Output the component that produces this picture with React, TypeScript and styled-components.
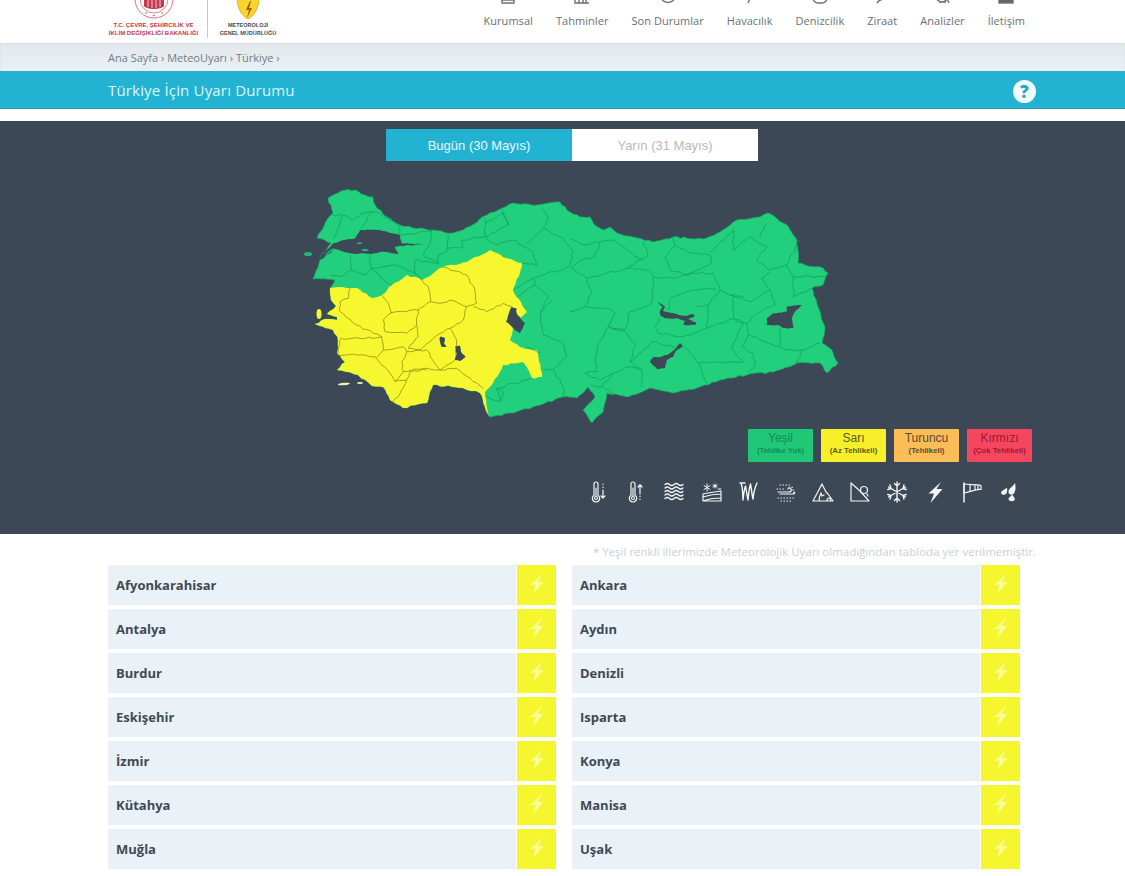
import React from 'react';
import styled, { createGlobalStyle } from 'styled-components';

const Global = createGlobalStyle`
  html, body { margin: 0; padding: 0; background: #fff; overflow: hidden; }
  body { font-family: "Open Sans", "Liberation Sans", sans-serif; }
  * { box-sizing: border-box; }
`;
const Page = styled.div`width: 1125px; height: 876px; overflow: hidden; background: #fff;`;
const Header = styled.header`
  height: 43px; display: flex; justify-content: space-between; padding: 0 100px 0 108px;
  overflow: hidden; background: #fff;
`;
const Logos = styled.div`display: flex; align-items: flex-start;`;
const LogoBlock = styled.div<{ $w: number }>`display: flex; flex-direction: column; align-items: center; width: ${p => p.$w}px;`;
const Divider = styled.div`width: 1px; height: 38px; background: #c9c9c9; margin: 0 10px 0 8px;`;
const Emblem = styled.svg`display: block; margin-top: -22px; height: 42px; width: 42px; flex: none;`;
const LogoText = styled.div<{ $s: number; $c: string; $m: number }>`
  font-family: "Liberation Sans", sans-serif; font-weight: 700; text-align: center; white-space: nowrap;
  font-size: ${p => p.$s}px; line-height: 8px; color: ${p => p.$c}; margin-top: ${p => p.$m}px;
`;
const Nav = styled.nav`display: flex; gap: 23px;`;
const NavItem = styled.a`
  display: flex; flex-direction: column; align-items: center; font-size: 11px; line-height: 15px;
  color: #6a7075; white-space: nowrap; letter-spacing: 0.05px;
`;
const NavIcon = styled.svg`display: block; width: 20px; height: 20px; margin-top: -14px; margin-bottom: 7px; fill: none; stroke: #6b7177; stroke-width: 1.4;`;
const Crumbs = styled.div`
  height: 28px; background: linear-gradient(#e3e8ec, #e9f0f5); box-shadow: inset 0 1px 2px #d6dadd;
  padding: 1px 108px 0; display: flex; align-items: center; font-size: 11px; color: #737d86;
`;
const TitleBar = styled.div`
  height: 38px; background: #22b3d3; border-bottom: 1px solid #2a9db6; display: flex; align-items: center;
  justify-content: space-between; padding: 0 89px 0 108px; color: #dff7fb; font-size: 15px; font-weight: 500;
  letter-spacing: 0.17px;
`;
const Help = styled.div`
  width: 23px; height: 23px; border-radius: 50%; background: #f3fbfd; color: #22a9c8; font-weight: 800;
  font-size: 17px; display: flex; align-items: center; justify-content: center; margin: 4px 0 0 0;
`;
const Dark = styled.section`
  margin-top: 12px; height: 413px; background: #3d4856; display: flex; flex-direction: column; padding-top: 8px;
`;
const Tabs = styled.div`display: flex; justify-content: center; height: 32px; flex: none; padding-left: 19px;`;
const Tab = styled.div<{ $active?: boolean }>`
  width: 186px; display: flex; align-items: center; justify-content: center;
  font-family: "Liberation Sans", sans-serif; font-size: 13px;
  background: ${p => (p.$active ? '#22b3d3' : '#fff')}; color: ${p => (p.$active ? '#e8f7fa' : '#b9b9b9')};
`;
const MapSvg = styled.svg`display: block; flex: none; width: 1125px; height: 268px;`;
const Legend = styled.div`display: flex; justify-content: flex-end; gap: 8px; padding-right: 93px; flex: none;`;
const LegendBox = styled.div<{ $bg: string; $fg: string }>`
  width: 65px; height: 33px; border-radius: 1px; background: ${p => p.$bg}; color: ${p => p.$fg};
  font-family: "Liberation Sans", sans-serif; display: flex; flex-direction: column; align-items: center; padding-top: 2px;
`;
const LegendName = styled.span`font-size: 12px; line-height: 14px;`;
const LegendSub = styled.span`font-size: 7.8px; font-weight: 700; line-height: 12px; white-space: nowrap;`;
const IconRow = styled.div`display: flex; justify-content: flex-end; gap: 13.2px; padding: 18px 104px 0 0;`;
const Hazard = styled.svg`display: block; width: 24px; height: 24px; fill: none; stroke: #f2f4f5; stroke-width: 1.2; stroke-linecap: round; stroke-linejoin: round;`;
const Note = styled.div`
  height: 31px; padding: 0 89px 0 0; text-align: right; font-size: 11.5px; line-height: 35px; color: #c9d0d5; white-space: nowrap;
`;
const Grid = styled.div`display: grid; grid-template-columns: 448px 448px; column-gap: 16px; row-gap: 4px; padding-left: 108px;`;
const Row = styled.div`display: flex; height: 40px; gap: 1px;`;
const Name = styled.div`
  flex: 1; background: #eaf1f7; color: #3f4a55; font-weight: 700; font-size: 13px; padding-left: 8px;
  display: flex; align-items: center;
`;
const Cell = styled.div`width: 39px; background: #f6f62e; display: flex; align-items: center; justify-content: center;`;
const Bolt = styled.svg`display: block; width: 14px; height: 20px; fill: #fbfb9a; margin-top: -3px;`;

const rnd = (a: number, b: number, c: number, d: number, i: number) => {
  const v = Math.sin(a * 12.9898 + b * 78.233 + c * 37.719 + d * 11.13 + i * 3.7) * 43758.5453;
  return (v - Math.floor(v) - 0.5) * 2;
};
/* Roughens a straight-segment outline so that it reads as a coast or a border on the map. */
const wiggle = (d: string, amp: number, step: number) => {
  const n = (d.match(/-?[\d.]+/g) || []).map(Number);
  const pts: [number, number][] = [];
  for (let i = 0; i + 1 < n.length; i += 2) pts.push([n[i], n[i + 1]]);
  const closed = /Z/.test(d);
  if (closed) pts.push(pts[0]);
  let out = `M${pts[0][0]} ${pts[0][1]}`;
  for (let s = 0; s + 1 < pts.length; s++) {
    const [ax, ay] = pts[s];
    const [bx, by] = pts[s + 1];
    const len = Math.hypot(bx - ax, by - ay) || 1;
    const parts = Math.max(1, Math.round(len / step));
    for (let i = 1; i < parts; i++) {
      const t = i / parts;
      const o = amp * rnd(ax, ay, bx, by, i);
      out += `L${(ax + (bx - ax) * t - ((by - ay) / len) * o).toFixed(1)} ${(ay + (by - ay) * t + ((bx - ax) / len) * o).toFixed(1)}`;
    }
    out += `L${bx} ${by}`;
  }
  return out + (closed ? 'Z' : '');
};

const WEST_COAST = '333 330 315 324 325 319 337 320 337 317 327 314 336 306 331 300 330 293 330 288';
const LAND = `M328 198 L333 195 345 190 355 190 365 195 373 197 375 205 387 217 400 225 413 228 433 230 453 233 463 230 487 215 513 203 537 205 560 202 567 210 580 217 590 217 596 226 603 230 610 227 617 233 633 237 653 242 673 237 703 239 720 232 737 220 760 217 768 213 787 225 797 240 798 263 823 268 828 273 823 285 812 288 818 307 825 327 822 343 832 350 838 363 827 373 820 363 797 363 773 372 747 375 720 380 697 388 673 393 650 388 628 397 607 393 603 412 592 423 583 410 595 397 588 387 577 398 563 397 533 407 513 413 490 417 485 407 480 393 463 388 433 385 427 403 403 408 390 400 383 387 372 386 358 375 337 370 345 362 337 353 338 340 ${WEST_COAST} 335 280 313 279 320 260 337 247 320 257 331 243 317 238 325 223 333 213 Z`;
const YELLOW = `M330 288 L343 287 357 288 372 298 382 295 392 285 407 275 422 280 443 267 467 262 490 250 503 257 522 263 520 273 513 290 517 297 527 312 513 327 510 340 520 347 537 350 542 377 532 378 523 362 503 365 493 383 485 392 488 413 490 417 485 407 480 393 463 388 433 385 427 403 403 408 390 400 383 387 372 386 358 375 337 370 345 362 337 353 338 340 ${WEST_COAST} Z`;
const WEST_WATER = [
  'M60 230 L100 190 130 180 165 175 180 150 240 150 300 165 305 190 370 192 285 200 295 222 250 215 215 222 150 220 100 205 Z',
  'M635 380 L650 385 650 400 675 430 660 460 640 445 618 425 625 405 Z',
  'M420 470 L435 475 432 490 440 500 425 500 420 485 Z',
  'M465 500 L480 497 483 515 497 530 480 543 465 540 470 520 Z',
];
const EAST_WATER = [
  'M650 350 L695 345 675 365 665 385 670 415 640 415 625 405 590 405 590 385 610 370 650 365 Z',
  'M262 335 L285 350 278 362 300 368 320 372 350 378 368 372 375 378 355 387 380 398 375 405 340 405 345 392 320 385 285 385 272 378 270 362 278 352 Z',
  'M330 460 L338 468 318 482 310 500 290 510 285 535 262 538 240 515 250 502 275 500 300 490 318 475 Z',
];
const WEST_GREEN = [
  'M95 105 L130 105 160 120 185 100 215 95 185 145', 'M130 105 L120 130 100 178', 'M215 95 L240 100 300 140 295 165',
  'M300 165 L350 160 395 150 390 190 370 225 415 250 415 225 440 215 445 165', 'M445 205 L490 200 485 180 555 170 555 115',
  'M555 130 L610 100 625 135 555 170 590 195 640 180 700 215 710 255 665 250', 'M605 85 L625 135',
  'M725 85 L745 115 730 145 680 190', 'M730 145 L790 175 820 215 810 260 700 295 640 330', 'M650 350 L705 315 745 350 720 400',
  'M700 295 L705 315', 'M755 360 L720 400 730 465 790 490 800 530 760 570', 'M680 500 L720 520', 'M730 570 L760 570 790 620 790 650',
  'M590 625 L610 640 600 665', 'M560 650 L600 665 590 625 680 600 695 595', 'M345 240 L345 280 365 300', 'M415 250 L345 240',
  'M210 225 L215 265 250 300 275 315', 'M150 225 L155 270 120 290 90 285', 'M155 270 L195 285 215 265', 'M345 280 L290 255 215 265',
];
const WEST_YELLOW = [
  'M150 325 L145 355 120 365 120 395 170 435 220 460 245 470 250 510 228 535 270 580 285 605',
  'M270 400 L250 420 255 455 320 460 350 435 355 390 290 395 270 400', 'M245 345 L265 370 275 400', 'M392 365 L385 320 365 300',
  'M392 365 L355 390', 'M392 365 L420 370 450 360 500 380 530 370 525 330 500 285 430 262',
  'M500 380 L490 420 450 445 400 475 360 510 325 505 355 470 350 435', 'M320 515 L355 510 380 510 420 570 370 565 310 575 305 545 320 515',
  'M250 510 L310 500 320 515', 'M120 475 L180 475 245 470', 'M110 525 L170 525 228 530', 'M120 480 L115 520',
  'M520 380 L560 395 610 370 635 380', 'M450 445 L470 480 465 540 420 570', 'M420 570 L470 565 550 625',
  'M310 575 L285 605 320 600 295 650 275 670', 'M380 570 L330 575 320 600',
];
const EAST_GREEN = [
  'M0 145 L45 165 90 155 130 150 185 190 215 210 235 195 220 155', 'M90 155 L75 200 35 210 5 235', 'M5 235 L50 265 170 235 220 205',
  'M50 265 L65 310 45 350 0 365', 'M45 350 L115 355 135 370 115 410', 'M170 235 L235 240 250 260 245 340 180 365 165 420 115 410 85 460 75 515 80 545 45 550',
  'M115 410 L165 425 195 460 180 515', 'M250 260 L310 265 360 250 430 250 450 300 480 315 520 320', 'M310 140 L315 165 285 205 300 240 360 255',
  'M315 165 L365 190 420 195 425 220 360 250', 'M420 190 L490 120 490 180 540 140 590 170 560 210 600 240 650 225 690 150', 'M570 140 L590 100',
  'M600 245 L575 265 600 300 545 335 480 315', 'M600 300 L615 345 560 370 530 400 490 385 490 310', 'M650 225 L670 260 670 320 725 295', 'M670 260 L765 260',
  'M490 385 L520 400 485 475 520 515 385 520 355 480 330 460', 'M530 400 L535 435 515 470 550 490 555 525 535 550', 'M535 435 L630 470 645 480 695 480 750 460',
  'M630 415 L630 470', 'M695 480 L680 520', 'M385 520 L410 580', 'M180 515 L215 540 215 590', 'M180 515 L250 455 320 475',
  'M270 385 L255 410 265 430 340 440 410 415 415 345 380 350', 'M300 325 L350 305 420 295 440 300', 'M300 325 L295 360', 'M415 345 L450 300', 'M410 415 L490 385',
  'M45 550 L90 570 130 550 175 530 215 540', 'M60 585 L100 590 135 615', 'M130 550 L95 590',
];

const TurkeyMap = () => (
  <MapSvg viewBox="0 161 1125 268">
    <path d={wiggle(LAND, 0.9, 4)} fill="#21cf7d" stroke="#17a866" strokeWidth="0.7" strokeLinejoin="round" />
    <path d={wiggle(YELLOW, 0.9, 4)} fill="#f7f72f" strokeLinejoin="round" />
    <ellipse cx="308" cy="254" rx="4" ry="2" fill="#21b57c" />
    <ellipse cx="319" cy="314" rx="2.5" ry="5" fill="#f7f72f" />
    <ellipse cx="344" cy="384" rx="6" ry="1.2" fill="#f2f2b0" transform="rotate(-6 344 384)" />
    <ellipse cx="360" cy="383" rx="3" ry="1" fill="#f2f2b0" />
    <g transform="translate(300 180) scale(0.3333)" fill="none" strokeWidth="2" strokeLinejoin="round">
      {WEST_GREEN.map(d => <path key={d} d={wiggle(d, 3, 12)} stroke="#12985f" />)}
      {WEST_YELLOW.map(d => <path key={d} d={wiggle(d, 3, 12)} stroke="#7d7d12" />)}
      {WEST_WATER.map(d => <path key={d} d={wiggle(d, 1.5, 8)} fill="#3d4856" />)}
      <ellipse cx="178" cy="190" rx="8" ry="3" fill="#21b57c" />
      <ellipse cx="195" cy="210" rx="11" ry="3" fill="#21b57c" />
    </g>
    <g transform="translate(570 190) scale(0.3333)" fill="none" strokeWidth="2" strokeLinejoin="round">
      {EAST_GREEN.map(d => <path key={d} d={wiggle(d, 3, 12)} stroke="#12985f" />)}
      {EAST_WATER.map(d => <path key={d} d={wiggle(d, 1.5, 8)} fill="#3d4856" />)}
    </g>
  </MapSvg>
);

const NAV: [string, React.ReactNode][] = [
  ['Kurumsal', <path d="M4 2v15h12V2M4 14h12" />],
  ['Tahminler', <path d="M3 2v15h14M7 17v-5M11 17v-8M14 17v-4" />],
  ['Son Durumlar', <circle cx="10" cy="9" r="7.5" />],
  ['Havacılık', <path d="M8 17l3-7" />],
  ['Denizcilik', <rect x="3" y="2" width="14" height="15" rx="5" />],
  ['Ziraat', <path d="M5 17c2-3 5-4 8-4M9 14l3-6" />],
  ['Analizler', <path d="M4 9a6 6 0 0 0 11 4l2 4M7 16h7" />],
  ['İletişim', <rect x="3" y="2" width="14" height="15" fill="#5f666c" />],
];

const Icons = [
  <><path d="M6 4a2 2 0 0 1 4 0v11.2a3.7 3.7 0 1 1-4 0z" /><circle cx="8" cy="18" r="1.5" /><path d="M8 8v8M15 4v.5M15 7v.5M15 10v8M13 15.8l2 2.4 2-2.4" /></>,
  <><path d="M6 4a2 2 0 0 1 4 0v11.2a3.7 3.7 0 1 1-4 0z" /><circle cx="8" cy="18" r="1.5" /><path d="M8 8v8M15 5v9M13 7l2-2.4L17 7M15 16v.5M15 19v.5" /></>,
  <path strokeWidth="1.3" d="M3 4.500q2.250-2 4.500 0t4.500 0 4.500 0 4.500 0M3 8q2.250-2 4.500 0t4.500 0 4.500 0 4.500 0M3 11.500q2.250-2 4.500 0t4.500 0 4.500 0 4.500 0M3 15q2.250-2 4.500 0t4.500 0 4.500 0 4.500 0M3 18.500q2.250-2 4.500 0t4.500 0 4.500 0 4.500 0" />,
  <><path d="M3 21V14l5-1 13-2v10zM3 17c6-2 12-3 18-3M3 21c5-2 11-3 18-3" /><path strokeWidth="1" d="M7 4v7M4 5.500l6 4M10 5.500l-6 4M15 4v4M13 5l4 2M17 5l-4 2M18 9h3" /></>,
  <path strokeWidth="1.400" d="M3 3h5M4 3c2 5 1.500 10 2 17M6 20c.5-5 1-10 2.500-14 1 5 1.500 10 2.500 14 .5-6 1-11 2.500-16 1 5 1.500 11 2.500 15 .5-5 1.500-11 4-16" />,
  <><path d="M4 12h10c3 0 4-1 3-3s-3-1-3 0M6 14h13c2 0 2-2 1-2" /><path strokeDasharray="0.5 2.500" d="M6 5l12 0M3 9l7 0M4 18l16 0M7 21l11 0M18 7l3 8" /></>,
  <><path d="M2 21L11 4l4 8 2 2 5 7zM8 21c0-3 1-6 2-8l1 3 2-1M16 21c0-2 1-3 2-3s1.500 2 1.500 3" /></>,
  <><path d="M3 3v18h18L12 11 3 3" /><circle cx="16" cy="10" r="3.500" /><path d="M19 14l1 2" /></>,
  <path strokeWidth="1.400" d="M12 2v20M3.500 7l17 10M3.500 17l17-10M12 6L9.500 3.500M12 6l2.500-2.500M12 18l-2.500 2.500M12 18l2.500 2.500M6 8.500L2.800 9.500M6 8.500L5 5M18 15.500l3.200-1M18 15.500l1 3.500M6 15.500L5 19M6 15.500l-3.200-1M18 8.500L19 5M18 8.500l3.200 1" />,
  <path fill="#f2f4f5" stroke="none" d="M18 2L5.500 13.500h5.500L7.500 23 19.500 9h-6z" />,
  <><path strokeWidth="1.500" d="M4 22V3" /><path d="M4 4c6 1 12 0 17 1.500v4C15 9 10 12 4 13zM10 4.500v7M15 5v5.500M18 5v4" /></>,
  <g fill="#f2f4f5" stroke="none"><path d="M18 3c.8 4 1 8-1.500 11-1.800 1.500-5 .5-5-2 0-3.500 4.500-5.500 6.500-9z" /><path d="M15 14.500c1.500 2 3 3.500 2.800 5-.4 2-5.800 2.500-6.300-.5-.2-1.500 2.500-2.500 3.500-4.500z" /><path d="M10 7.500c.3 2.500.5 4.500-1 6.500-1.500 1.200-4.500 1-5-1 0-2.500 4.500-3.500 6-5.500z" /></g>,
];

const LEGEND = [
  ['Yeşil', '(Tehlike Yok)', '#20c777', '#0d8f52'],
  ['Sarı', '(Az Tehlikeli)', '#f8ef2b', '#59591a'],
  ['Turuncu', '(Tehlikeli)', '#fbbd58', '#5a4a2a'],
  ['Kırmızı', '(Çok Tehlikeli)', '#f4475f', '#9c1834'],
];
const CITIES = ['Afyonkarahisar', 'Ankara', 'Antalya', 'Aydın', 'Burdur', 'Denizli', 'Eskişehir', 'Isparta', 'İzmir', 'Konya', 'Kütahya', 'Manisa', 'Muğla', 'Uşak'];

export default function App() {
  return (
    <Page>
      <Global />
      <Header>
        <Logos>
          <LogoBlock $w={91}>
            <Emblem viewBox="0 0 42 42">
              <circle cx="21" cy="21" r="19" fill="#fff" stroke="#c9505e" strokeWidth="0.8" />
              <circle cx="21" cy="21" r="14" fill="none" stroke="#c9505e" strokeWidth="0.7" />
              <path d="M11 18h20v10c-3 4-17 4-20 0z" fill="#c23a4c" />
              <path d="M15 20v9M19 20v10M23 20v10M27 20v9" stroke="#f3c9cf" strokeWidth="1" />
              <circle cx="21" cy="37.500" r="0.8" fill="#c23a4c" /><circle cx="13" cy="35" r="0.8" fill="#c23a4c" /><circle cx="29" cy="35" r="0.8" fill="#c23a4c" />
            </Emblem>
            <LogoText $s={6} $c="#c0394a" $m={1}>T.C. ÇEVRE, ŞEHİRCİLİK VE</LogoText>
            <LogoText $s={6} $c="#c0394a" $m={0}>İKLİM DEĞİŞİKLİĞİ BAKANLIĞI</LogoText>
          </LogoBlock>
          <Divider />
          <LogoBlock $w={60}>
            <Emblem viewBox="0 0 42 42">
              <path d="M10 20h22c0 10-5 18-11 21-6-3-11-11-11-21z" fill="#f4d62c" stroke="#e6b325" strokeWidth="1" />
              <path d="M23 23l-4 9h3l-2 8 5-10h-3l2-7z" fill="#a8541b" />
            </Emblem>
            <LogoText $s={5.5} $c="#4a4a4a" $m={1}>METEOROLOJİ</LogoText>
            <LogoText $s={5.5} $c="#4a4a4a" $m={0}>GENEL MÜDÜRLÜĞÜ</LogoText>
          </LogoBlock>
        </Logos>
        <Nav>
          {NAV.map(([label, icon]) => (
            <NavItem key={label}>
              <NavIcon viewBox="0 0 20 20">{icon}</NavIcon>
              {label}
            </NavItem>
          ))}
        </Nav>
      </Header>
      <Crumbs>Ana Sayfa › MeteoUyarı › Türkiye ›</Crumbs>
      <TitleBar>
        Türkiye İçin Uyarı Durumu
        <Help>?</Help>
      </TitleBar>
      <Dark>
        <Tabs>
          <Tab $active>Bugün (30 Mayıs)</Tab>
          <Tab>Yarın (31 Mayıs)</Tab>
        </Tabs>
        <TurkeyMap />
        <Legend>
          {LEGEND.map(([name, sub, bg, fg]) => (
            <LegendBox key={name} $bg={bg} $fg={fg}>
              <LegendName>{name}</LegendName>
              <LegendSub>{sub}</LegendSub>
            </LegendBox>
          ))}
        </Legend>
        <IconRow>
          {Icons.map((icon, i) => <Hazard key={i} viewBox="0 0 24 24">{icon}</Hazard>)}
        </IconRow>
      </Dark>
      <Note>* Yeşil renkli illerimizde Meteorolojik Uyarı olmadığından tabloda yer verilmemiştir.</Note>
      <Grid>
        {CITIES.map(c => (
          <Row key={c}>
            <Name>{c}</Name>
            <Cell>
              <Bolt viewBox="0 0 14 20"><path d="M12 0L0.500 11h5L3 20 13.500 8H8z" /></Bolt>
            </Cell>
          </Row>
        ))}
      </Grid>
    </Page>
  );
}
